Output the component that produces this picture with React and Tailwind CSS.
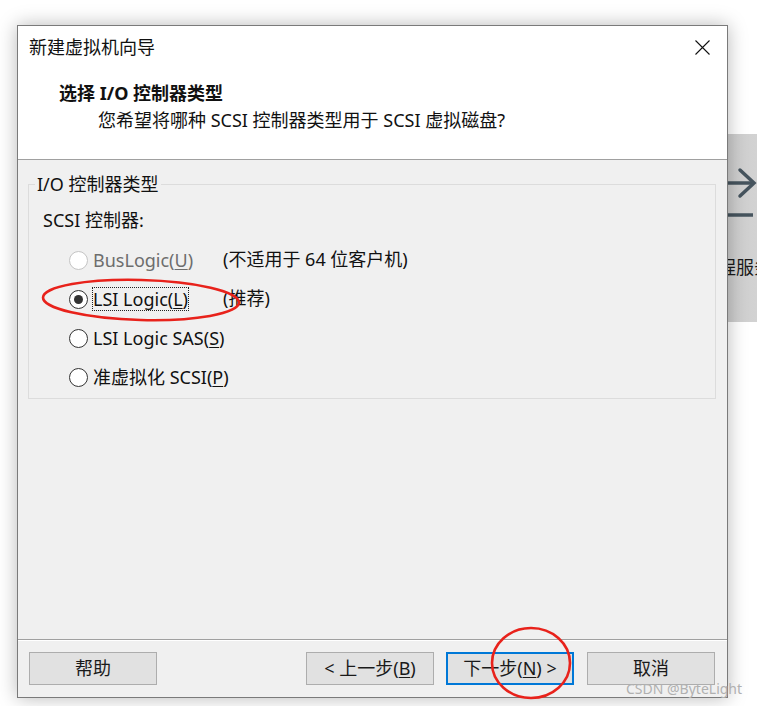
import React from "react";

/* VMware 新建虚拟机向导 — I/O 控制器类型 */

function Radio({ checked, disabled }) {
  return (
    <span
      className={
        "flex items-center justify-center w-[19px] h-[19px] rounded-full border bg-white shrink-0 " +
        (disabled ? "border-[#c4c4c4]" : "border-[#333333]")
      }
    >
      {checked && <span className="w-[9px] h-[9px] rounded-full bg-[#333333]" />}
    </span>
  );
}

function Option({ label, hint, checked, disabled, focused }) {
  return (
    <div className="flex items-center h-[39px] pl-[40px]">
      <Radio checked={checked} disabled={disabled} />
      <div className="ml-[4px] w-[131px] shrink-0">
        <span
          className={
            "inline-block whitespace-nowrap leading-[22px] border " +
            (focused ? "border-dotted border-[#222]" : "border-transparent") +
            (disabled ? " text-[#6d6d6d]" : " text-[#111]")
          }
        >
          {label}
        </span>
      </div>
      {hint && <span className="text-[#111] leading-[24px] -mt-[3px] whitespace-nowrap">{hint}</span>}
    </div>
  );
}

function Btn({ children, primary }) {
  return (
    <button
      className={
        "w-[128px] h-[33px] flex items-center justify-center bg-[#e1e1e1] text-[#1a1a1a] text-[18px] whitespace-nowrap " +
        (primary ? "border-2 border-[#0078d7]" : "border border-[#adadad]")
      }
    >
      {children}
    </button>
  );
}

export default function App() {
  return (
    <div className="relative w-[757px] h-[706px] overflow-hidden bg-white text-[18px] font-['Noto_Sans','Noto_Sans_CJK_SC',sans-serif]">
      {/* 背景里被遮住的面板 */}
      <div className="absolute left-[700px] top-[134px] w-[80px] h-[188px] overflow-hidden bg-[linear-gradient(90deg,#c9c9c9,#d6d6d6)]">
        <svg className="absolute left-[28px] top-[30px]" width="40" height="60" viewBox="0 0 40 60">
          <path d="M0 19 H26" stroke="#46545e" strokeWidth="3.5" fill="none" />
          <path d="M12 6 L26 19 L12 32" stroke="#46545e" strokeWidth="3.5" fill="none" strokeLinecap="round" />
          <path d="M0 51 H25" stroke="#46545e" strokeWidth="3.5" fill="none" />
        </svg>
        <span className="absolute left-[18px] top-[121px] whitespace-nowrap leading-[24px] text-[#1a1a1a]">程服务</span>
      </div>

      {/* 对话框 */}
      <div className="relative z-10 ml-[17px] mt-[25px] w-[711px] h-[673px] border border-[#7a7a7a] bg-[#f0f0f0] flex flex-col shadow-[0_0_18px_rgba(0,0,0,0.28)]">
        {/* 头部 */}
        <div className="h-[134px] bg-white border-b border-[#a0a0a0] shrink-0">
          <div className="h-[42px] flex items-center justify-between pl-[11px] pr-[17px]">
            <span className="text-[#111] leading-[24px]">新建虚拟机向导</span>
            <svg width="15" height="15" viewBox="0 0 15 15">
              <path d="M0.5 0.5 L14.5 14.5 M14.5 0.5 L0.5 14.5" stroke="#111" strokeWidth="1.1" />
            </svg>
          </div>
          <div className="mt-[13px] pl-[41px] leading-[24px] font-bold text-[#111]">选择 I/O 控制器类型</div>
          <div className="mt-[3px] pl-[80px] leading-[24px] text-[#111]">您希望将哪种 SCSI 控制器类型用于 SCSI 虚拟磁盘?</div>
        </div>

        {/* 内容 */}
        <div className="flex-1 px-[10px] pr-[11px]">
          <div className="mt-[24px] border border-[#dcdcdc] pb-[1px]">
            <div className="-mt-[13px] ml-[6px] px-[2px] w-fit bg-[#f0f0f0] leading-[24px] text-[#111]">I/O 控制器类型</div>
            <div className="mt-[12px] pl-[14px] leading-[24px] text-[#111]">SCSI 控制器:</div>
            <div className="mt-[9px]">
              <Option
                disabled
                label={<>BusLogic(<u className="underline-offset-2">U</u>)</>}
                hint="(不适用于 64 位客户机)"
              />
              <Option
                checked
                focused
                label={<>LSI Logic(<u className="underline-offset-2">L</u>)</>}
                hint="(推荐)"
              />
              <Option label={<>LSI Logic SAS(<u className="underline-offset-2">S</u>)</>} />
              <Option label={<>准虚拟化 SCSI(<u className="underline-offset-2">P</u>)</>} />
            </div>
          </div>
        </div>

        {/* 底部按钮 */}
        <div className="h-[58px] shrink-0 border-t border-[#a0a0a0] shadow-[inset_0_1px_0_#ffffff] pt-[12px] pl-[11px] pr-[12px] flex">
          <Btn>帮助</Btn>
          <div className="flex-1" />
          <div className="flex gap-[12px]">
            <Btn>
              &lt; 上一步(<u className="underline-offset-2">B</u>)
            </Btn>
            <Btn primary>
              下一步(<u className="underline-offset-2">N</u>) &gt;
            </Btn>
            <div className="ml-[1px]">
              <Btn>取消</Btn>
            </div>
          </div>
        </div>
      </div>

      {/* 红色标注 */}
      <svg className="absolute inset-0 z-20 pointer-events-none" width="757" height="706">
        <ellipse cx="141" cy="300" rx="98" ry="20" fill="none" stroke="#e8221b" strokeWidth="2.6" transform="rotate(1.5 141 300)" />
        <ellipse cx="531" cy="663" rx="39" ry="35" fill="none" stroke="#e8221b" strokeWidth="2.6" />
      </svg>

      {/* 水印 */}
      <span className="absolute z-30 left-[626px] top-[679px] text-[14px] leading-[20px] text-[#b0b0b0] whitespace-nowrap">
        CSDN @ByteLight
      </span>
    </div>
  );
}
